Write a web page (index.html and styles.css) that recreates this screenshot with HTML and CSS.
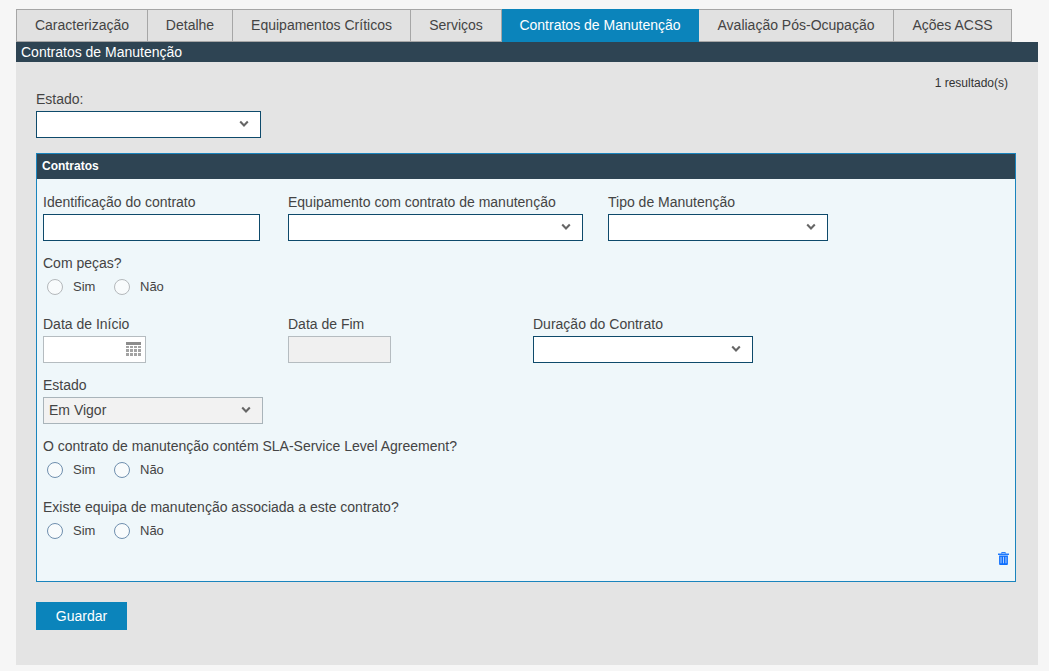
FILE: index.html
```html
<!DOCTYPE html>
<html lang="pt">
<head>
    <meta charset="UTF-8">
    <meta name="viewport" content="width=device-width, initial-scale=1.0">
    <title>Contratos de Manutenção</title>
    <link rel="stylesheet" href="styles.css">
</head>
<body>

    <svg class="icon-defs" width="0" height="0">
        <symbol id="chevron" viewBox="0 0 10 8">
            <path d="M1.2 1.6 5 5.4l3.8-3.8" fill="none" stroke="#666" stroke-width="2.1"/>
        </symbol>
    </svg>

    <div class="page">

        <!-- Tabs -->
        <ul class="tabs">
            <li class="tab tab-1">Caracterização</li>
            <li class="tab tab-2">Detalhe</li>
            <li class="tab tab-3">Equipamentos Críticos</li>
            <li class="tab tab-4">Serviços</li>
            <li class="tab tab-5 active">Contratos de Manutenção</li>
            <li class="tab tab-6">Avaliação Pós-Ocupação</li>
            <li class="tab tab-7">Ações ACSS</li>
        </ul>

        <div class="panel">
            <div class="panel-title">Contratos de Manutenção</div>

            <div class="panel-body">
                <p class="results">1 resultado(s)</p>

                <label class="field-label">Estado:</label>
                <div class="select select-filter">
                    <svg class="chevron"><use href="#chevron"/></svg>
                </div>

                <!-- Contratos -->
                <div class="card">
                    <div class="card-header">Contratos</div>
                    <div class="card-body">

                        <div class="row">
                            <div class="field field-id">
                                <label class="field-label">Identificação do contrato</label>
                                <input type="text" class="text-input">
                            </div>
                            <div class="field field-equip">
                                <label class="field-label">Equipamento com contrato de manutenção</label>
                                <div class="select">
                                    <svg class="chevron"><use href="#chevron"/></svg>
                                </div>
                            </div>
                            <div class="field field-wide">
                                <label class="field-label">Tipo de Manutenção</label>
                                <div class="select">
                                    <svg class="chevron"><use href="#chevron"/></svg>
                                </div>
                            </div>
                        </div>

                        <div class="question">
                            <label class="field-label">Com peças?</label>
                            <div class="radios">
                                <span class="radio muted"></span><span class="radio-text">Sim</span>
                                <span class="radio muted"></span><span class="radio-text">Não</span>
                            </div>
                        </div>

                        <div class="row row-dates">
                            <div class="field field-date">
                                <label class="field-label">Data de Início</label>
                                <div class="date-input">
                                    <svg class="calendar" width="15" height="15" viewBox="0 0 15 15">
                                        <path d="M0 0h15v3H0z" fill="#8c8c8c"/>
                                        <path d="M0 4h3v2H0zM4 4h3v2H4zM8 4h3v2H8zM12 4h3v2h-3zM0 7h3v3H0zM4 7h3v3H4zM8 7h3v3H8zM12 7h3v3h-3zM0 11h3v3H0zM4 11h3v3H4zM8 11h3v3H8zM12 11h3v3h-3z" fill="#a3a3a3"/>
                                    </svg>
                                </div>
                            </div>
                            <div class="field field-date">
                                <label class="field-label">Data de Fim</label>
                                <div class="date-input disabled"></div>
                            </div>
                            <div class="field field-wide">
                                <label class="field-label">Duração do Contrato</label>
                                <div class="select">
                                    <svg class="chevron"><use href="#chevron"/></svg>
                                </div>
                            </div>
                        </div>

                        <div class="row row-state">
                            <div class="field field-wide">
                                <label class="field-label">Estado</label>
                                <div class="select readonly">
                                    <span class="select-value">Em Vigor</span>
                                    <svg class="chevron"><use href="#chevron"/></svg>
                                </div>
                            </div>
                        </div>

                        <div class="question">
                            <label class="field-label">O contrato de manutenção contém SLA-Service Level Agreement?</label>
                            <div class="radios">
                                <span class="radio"></span><span class="radio-text">Sim</span>
                                <span class="radio"></span><span class="radio-text">Não</span>
                            </div>
                        </div>

                        <div class="question">
                            <label class="field-label">Existe equipa de manutenção associada a este contrato?</label>
                            <div class="radios">
                                <span class="radio"></span><span class="radio-text">Sim</span>
                                <span class="radio"></span><span class="radio-text">Não</span>
                            </div>
                        </div>

                        <div class="card-actions">
                            <svg width="11" height="13" viewBox="0 0 12 14">
                                <path d="M4 1.600V.5h4v1.100" fill="none" stroke="#0d6efd" stroke-width="1"/>
                                <path d="M0 1.600h12v1.500H0z" fill="#0d6efd"/>
                                <path d="M1.200 3.600h9.600V13a1 1 0 0 1-1 1H2.200a1 1 0 0 1-1-1z" fill="#0d6efd"/>
                                <path d="M3.300 5.200v7M6 5.200v7M8.700 5.200v7" stroke="#bcd8ff" stroke-width="1"/>
                            </svg>
                        </div>
                    </div>
                </div>

                <button class="btn-save" type="button">Guardar</button>
            </div>
        </div>
    </div>

</body>
</html>
```

FILE: styles.css
```css
* {
    box-sizing: border-box;
}
body {
    font-family: "Liberation Sans", Arial, sans-serif;
    font-size: 14px;
    margin: 0;
    padding: 0;
    background-color: #f6f6f6;
    color: #444;
}
.icon-defs {
    display: block;
    height: 0;
}
.page {
    width: 1022px;
    margin-left: 16px;
    padding-top: 9px;
}

/* tabs */
.tabs {
    display: flex;
    list-style: none;
    margin: 0;
    padding: 0;
}
.tab {
    height: 33px;
    line-height: 31px;
    text-align: center;
    border: 1px solid #a6a6a6;
    border-left: none;
    background-color: #e1e1e1;
    color: #444;
}
.tab-1 { width: 132px; border-left: 1px solid #a6a6a6; }
.tab-2 { width: 85px; }
.tab-3 { width: 178px; }
.tab-4 { width: 91px; }
.tab-5 { width: 197px; }
.tab-6 { width: 195px; }
.tab-7 { width: 118px; }
.tab.active {
    background-color: #0b84bb;
    border-color: #0b84bb;
    color: #fff;
}

/* panel */
.panel {
    background-color: #e4e4e4;
    height: 623px;
}
.panel-title {
    height: 20px;
    line-height: 20px;
    padding-left: 5px;
    background-color: #2e4453;
    color: #fff;
}
.panel-body {
    padding: 13px 22px 0 20px;
}
.results {
    margin: 0 8px 0 0;
    height: 16px;
    line-height: 16px;
    font-size: 12px;
    text-align: right;
    color: #333;
}
.field-label {
    display: block;
    height: 16px;
    line-height: 16px;
    margin-bottom: 4px;
    color: #444;
}
.select {
    position: relative;
    height: 27px;
    padding-left: 5px;
    background-color: #fff;
    border: 1px solid #0e4a6b;
}
.select-filter {
    width: 225px;
}
.select-value {
    display: block;
    line-height: 24px;
}
.chevron {
    position: absolute;
    right: 11px;
    top: 8px;
    width: 10px;
    height: 8px;
}
.select.readonly {
    background-color: #f2f2f2;
    border-color: #a9b4ba;
}

/* card */
.card {
    margin-top: 15px;
    height: 429px;
    background-color: #eff7fa;
    border: 1px solid #1a84bd;
}
.card-header {
    height: 25px;
    line-height: 24px;
    padding-left: 5px;
    background-color: #2e4453;
    color: #fff;
    font-size: 12px;
    font-weight: bold;
}
.card-body {
    padding: 15px 6px 0;
}
.row {
    display: flex;
}
.row-dates {
    margin-top: 21px;
}
.row-state {
    margin-top: 14px;
}
.field-id {
    width: 217px;
    margin-right: 28px;
}
.field-equip {
    width: 295px;
    margin-right: 25px;
}
.field-wide {
    width: 220px;
}
.field-date {
    width: 103px;
    margin-right: 142px;
}
.text-input {
    display: block;
    width: 100%;
    height: 27px;
    background-color: #fff;
    border: 1px solid #0e4a6b;
    border-radius: 0;
    outline: none;
}
.date-input {
    display: flex;
    align-items: center;
    justify-content: flex-end;
    height: 27px;
    padding-right: 4px;
    background-color: #fff;
    border: 1px solid #b5bcc0;
}
.date-input.disabled {
    background-color: #f0f0f0;
}

/* radios */
.question {
    margin-top: 14px;
}
.question + .question {
    margin-top: 21px;
}
.radios {
    display: flex;
    align-items: center;
    height: 16px;
    margin-top: 8px;
    padding-left: 4px;
}
.radio {
    width: 16px;
    height: 16px;
    border-radius: 50%;
    background-color: #f8fbfc;
    border: 1.5px solid #6f8fae;
}
.radio.muted {
    border-color: #b4b8bb;
}
.radio-text {
    width: 51px;
    padding-left: 10px;
    margin-top: -2px;
    font-size: 13px;
    color: #444;
}
.card-actions {
    display: flex;
    justify-content: flex-end;
    margin-top: 13px;
}

/* button */
.btn-save {
    display: block;
    width: 91px;
    height: 28px;
    margin-top: 20px;
    padding: 0;
    border: none;
    background-color: #0b84bb;
    color: #fff;
    font-family: inherit;
    font-size: 14px;
}
```
